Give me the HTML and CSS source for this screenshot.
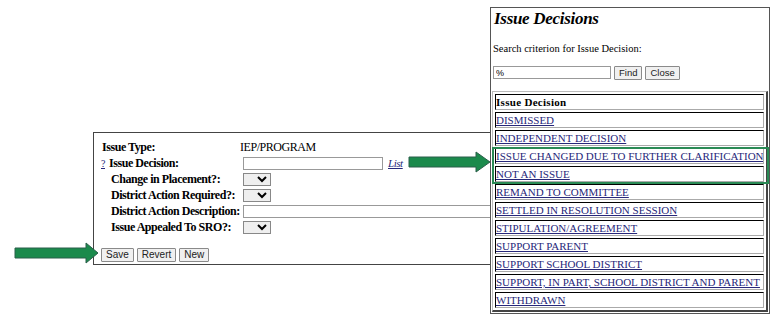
FILE: index.html
```html
<!DOCTYPE html>
<html lang="en">
<head>
  <meta charset="UTF-8" />
  <title>Issue Decisions</title>
  <link rel="stylesheet" href="styles.css">
</head>
<body>
  <div class="form-panel">
    <table class="form-table">
      <tr>
        <td class="lbl first">Issue Type:</td>
        <td class="val">IEP/PROGRAM</td>
      </tr>
      <tr>
        <td class="lbl"><a class="q" href="#">?</a>Issue Decision:</td>
        <td class="val"><input type="text" class="txt-short"><a class="list" href="#">List</a></td>
      </tr>
      <tr>
        <td class="lbl ind">Change in Placement?:</td>
        <td class="val"><select class="sel"></select></td>
      </tr>
      <tr>
        <td class="lbl ind">District Action Required?:</td>
        <td class="val"><select class="sel"></select></td>
      </tr>
      <tr>
        <td class="lbl ind">District Action Description:</td>
        <td class="val"><input type="text" class="txt-long"></td>
      </tr>
      <tr>
        <td class="lbl ind">Issue Appealed To SRO?:</td>
        <td class="val"><select class="sel"></select></td>
      </tr>
    </table>
    <div class="buttons">
      <button>Save</button>
      <button>Revert</button>
      <button>New</button>
    </div>
  </div>

  <div class="popup">
    <h1>Issue Decisions</h1>
    <p class="search-lbl">Search criterion for Issue Decision:</p>
    <div class="search">
      <input type="text" value="%">
      <button>Find</button>
      <button>Close</button>
    </div>
    <table class="list-table">
      <tr><th>Issue Decision</th></tr>
      <tr><td><a href="#">DISMISSED</a></td></tr>
      <tr><td><a href="#">INDEPENDENT DECISION</a></td></tr>
      <tr><td><a href="#">ISSUE CHANGED DUE TO FURTHER CLARIFICATION</a></td></tr>
      <tr><td><a href="#">NOT AN ISSUE</a></td></tr>
      <tr><td><a href="#">REMAND TO COMMITTEE</a></td></tr>
      <tr><td><a href="#">SETTLED IN RESOLUTION SESSION</a></td></tr>
      <tr><td><a href="#">STIPULATION/AGREEMENT</a></td></tr>
      <tr><td><a href="#">SUPPORT PARENT</a></td></tr>
      <tr><td><a href="#">SUPPORT SCHOOL DISTRICT</a></td></tr>
      <tr><td><a href="#">SUPPORT, IN PART, SCHOOL DISTRICT AND PARENT</a></td></tr>
      <tr><td><a href="#">WITHDRAWN</a></td></tr>
    </table>
  </div>

  <div class="highlight"></div>

  <svg class="arrow arrow-list" width="84" height="24" viewBox="0 0 84 24">
    <polygon points="1,7 68,7 68,2 82,12 68,22 68,17 1,17" />
  </svg>
  <svg class="arrow arrow-save" width="86" height="24" viewBox="0 0 86 24">
    <polygon points="1,7 72,7 72,2 84,12 72,22 72,17 1,17" />
  </svg>
</body>
</html>
```

FILE: styles.css
```css
body {
  margin: 0;
  background: #ffffff;
  font-family: "Liberation Serif", "Times New Roman", serif;
  color: #000;
  width: 777px;
  height: 320px;
  overflow: hidden;
}
a {
  color: #27277a;
}

/* main form */
.form-panel {
  margin: 132px 0 0 93px;
  width: 440px;
  height: 133px;
  border: 1px solid #444;
  padding: 6px 0 0 7px;
  box-sizing: border-box;
}
.form-table {
  border-collapse: collapse;
  table-layout: fixed;
  width: 420px;
}
.form-table td {
  padding: 0;
  height: 16px;
  font-size: 12px;
  letter-spacing: -0.45px;
  white-space: nowrap;
  overflow: visible;
}
.lbl {
  font-weight: bold;
  width: 139px;
}
.lbl.first {
  padding-left: 1px;
  width: 138px;
}
.lbl .q {
  display: inline-block;
  width: 8px;
  font-weight: normal;
  font-size: 10px;
}
.lbl.ind {
  padding-left: 10px;
  width: 129px;
}
.txt-short {
  width: 140px;
  height: 13px;
  box-sizing: border-box;
  border: 1px solid #999;
  margin: 0 0 0 3px;
  vertical-align: middle;
}
.txt-long {
  width: 260px;
  height: 13px;
  box-sizing: border-box;
  border: 1px solid #999;
  margin: 0 0 0 3px;
  vertical-align: middle;
}
.list {
  font-style: italic;
  font-size: 11px;
  margin-left: 5px;
}
.sel {
  width: 28px;
  height: 13px;
  margin: 0 0 0 3px;
  vertical-align: middle;
  font-size: 9px;
  border: 1px solid #888;
}
.buttons {
  margin-top: 13px;
  display: flex;
  gap: 3px;
}
button {
  font-family: "Liberation Sans", Arial, sans-serif;
  font-size: 10px;
  padding: 1px 4px;
  background: #f0f0f0;
  border: 1px solid #8a8a8a;
  border-radius: 1px;
  color: #222;
  height: 14px;
  line-height: 10px;
}

/* popup */
.popup {
  position: absolute;
  left: 490px;
  top: 7px;
  width: 280px;
  height: 307px;
  box-sizing: border-box;
  border: 1px solid #555;
  background: #fff;
  padding: 0 2px 0 1px;
}
.popup h1 {
  margin: 2px 0 0 2px;
  font-size: 17px;
  letter-spacing: -0.3px;
  font-style: italic;
  font-weight: bold;
  line-height: 18px;
}
.search-lbl {
  margin: 15px 0 0 1px;
  font-size: 10.5px;
}
.search {
  margin-top: 12px;
  margin-left: 1px;
  display: flex;
  gap: 3px;
}
.search button {
  font-size: 9.5px;
}
.search input {
  width: 118px;
  height: 13px;
  box-sizing: border-box;
  margin: 0;
  border: 1px solid #999;
  font-size: 9px;
  padding: 0 2px;
  font-family: "Liberation Sans", Arial, sans-serif;
}
.list-table {
  margin-top: 11px;
  width: 276px;
  table-layout: fixed;
  border: 1px outset #bbb;
  border-right: 2px solid #444;
  border-bottom: 2px solid #444;
  border-spacing: 2px;
}
.list-table th,
.list-table td {
  border: 1px inset #aaa;
  border-top-color: #555;
  border-left-color: #555;
  padding: 0;
  height: 14px;
  font-size: 11px;
  text-align: left;
  white-space: nowrap;
  overflow: hidden;
}
.list-table th {
  font-weight: bold;
  letter-spacing: 0.3px;
}

/* annotations */
.highlight {
  position: absolute;
  left: 492px;
  top: 147px;
  width: 273px;
  height: 33px;
  border: 2px solid #2a8a55;
}
.arrow {
  position: absolute;
}
.arrow polygon {
  fill: #1b8a4c;
  stroke: #2b5f4a;
  stroke-width: 1;
}
.arrow-list {
  left: 408px;
  top: 150px;
}
.arrow-save {
  left: 14px;
  top: 241px;
}
```
